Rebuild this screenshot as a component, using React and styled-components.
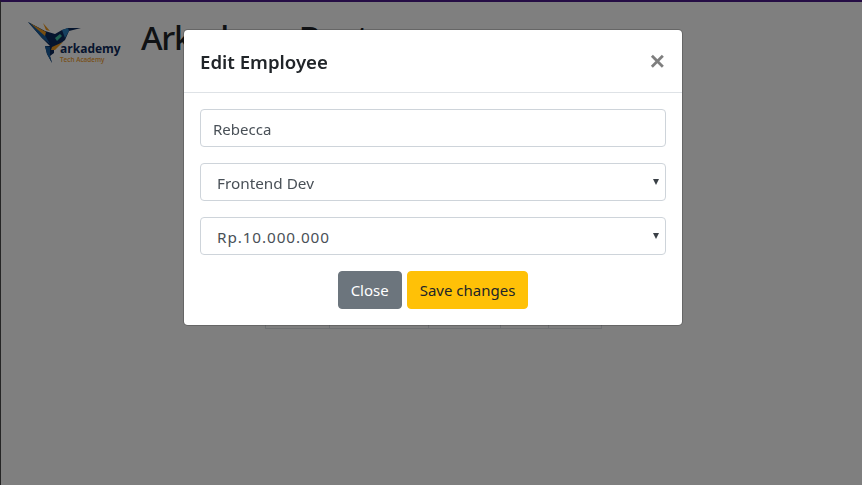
import React from "react";
import styled, { createGlobalStyle } from "styled-components";

const GlobalStyle = createGlobalStyle`
  * {
    box-sizing: border-box;
  }
  html,
  body {
    margin: 0;
    height: 100%;
    overflow: hidden;
    background: #fff;
    font-family: "Noto Sans", "Open Sans", sans-serif;
    color: #212529;
  }
`;

const Page = styled.div`
  height: 485px;
  border-top: 2px solid #4a1a8a;
  border-left: 1px solid #4a4a4a;
`;

const Header = styled.header`
  display: flex;
  align-items: flex-start;
  height: 72px;
  padding: 18px 0 0 25px;
`;

const Logo = styled.div`
  position: relative;
  width: 96px;
  height: 46px;
`;

const LogoName = styled.span`
  position: absolute;
  left: 34px;
  top: 21px;
  font-family: "Open Sans", sans-serif;
  font-size: 12px;
  font-weight: 700;
  line-height: 16px;
  color: #0d2a5c;
`;

const LogoTag = styled.span`
  position: absolute;
  left: 34px;
  top: 35px;
  font-family: "Open Sans", sans-serif;
  font-size: 6.4px;
  font-weight: 600;
  line-height: 9px;
  color: #f0a030;
`;

const Heading = styled.h1`
  margin: 0 0 0 19px;
  font-size: 33px;
  font-weight: 500;
  letter-spacing: -1.3px;
  line-height: 36px;
  white-space: nowrap;
`;

const Table = styled.div`
  display: grid;
  grid-template-columns: 64px 99px 72px 48px 53px;
  width: 337px;
  height: 200px;
  margin: 55px 0 0 264px;
  border-bottom: 1px solid #dee2e6;
  border-left: 1px solid #dee2e6;
`;

const Cell = styled.div`
  border-right: 1px solid #dee2e6;
`;

const Backdrop = styled.div`
  position: fixed;
  inset: 0;
  background: rgba(0, 0, 0, 0.5);
`;

const Modal = styled.div`
  position: fixed;
  top: 29px;
  left: 183px;
  width: 500px;
  background: #fff;
  border: 1px solid rgba(0, 0, 0, 0.2);
  border-radius: 4.8px;
  background-clip: padding-box;
`;

const ModalHeader = styled.div`
  display: flex;
  align-items: center;
  justify-content: space-between;
  height: 63px;
  padding: 0 17px 0 16px;
  border-bottom: 1px solid #dee2e6;
`;

const ModalTitle = styled.h5`
  margin: 2px 0 0;
  font-size: 18.6px;
  font-weight: 600;
  line-height: 30px;
`;

const CloseIcon = styled.button`
  padding: 0;
  border: 0;
  background: transparent;
  font-family: "Liberation Sans", sans-serif;
  font-size: 26px;
  font-weight: 700;
  line-height: 1;
  color: #000;
  opacity: 0.5;
  text-shadow: 0 1px 0 #fff;
`;

const ModalBody = styled.form`
  display: flex;
  flex-direction: column;
  gap: 16px;
  padding: 16px;
`;

const TextField = styled.input`
  width: 100%;
  height: 38px;
  padding: 7px 12px 6px;
  border: 1px solid #ced4da;
  border-radius: 4px;
  background: #fff;
  font-family: inherit;
  font-size: 15px;
  color: #495057;
`;

const SelectWrap = styled.div`
  position: relative;

  &::after {
    content: "";
    position: absolute;
    top: 16px;
    right: 7px;
    border-top: 6px solid #3a4046;
    border-left: 3.5px solid transparent;
    border-right: 3.5px solid transparent;
  }
`;

const SelectField = styled.select`
  display: block;
  width: 100%;
  height: 38px;
  padding: 7px 12px 5px 16px;
  border: 1px solid #ced4da;
  border-radius: 4px;
  background: #fff;
  font-family: inherit;
  font-size: 15.3px;
  letter-spacing: ${(p) => p.$spacing || "0"};
  color: #495057;
  appearance: none;
`;

const Actions = styled.div`
  display: flex;
  justify-content: center;
  gap: 5px;
`;

const Button = styled.button`
  height: 38px;
  padding: 6px 12px;
  border: 1px solid ${(p) => (p.$tone === "warning" ? "#ffc107" : "#6c757d")};
  border-radius: 4px;
  background: ${(p) => (p.$tone === "warning" ? "#ffc107" : "#6c757d")};
  font-family: inherit;
  font-size: 15px;
  line-height: 24px;
  color: ${(p) => (p.$tone === "warning" ? "#212529" : "#fff")};
`;

const Bird = () => (
  <svg width="60" height="46" viewBox="26 20 60 46">
    <polygon points="28,22 45,31 55,34 62,30 68,28 81,28 69,31 65,40 60,44 54,50 54,53 50,56 52,63 47,54 45,46 50,46 42,38" fill="#0d2a5c" />
    <polygon points="28,22 42,30 50,44 42,38" fill="#1a5f9e" />
    <polygon points="30,23 46,32 45,36" fill="#f09a1e" />
    <polygon points="43,23 50,31 46,30" fill="#f09a1e" />
    <polygon points="62,30 68,28 69,31 65,38" fill="#2a80c0" />
    <polygon points="55,38 60,34 62,36 57,41" fill="#3ec0a0" />
    <polygon points="52,47 63,42 55,50 51,50" fill="#f09a1e" />
    <polygon points="45,46 50,47 50,56 52,63 47,54" fill="#1a5f9e" />
  </svg>
);

const App = () => {
  return (
    <>
      <GlobalStyle />
      <Page>
        <Header>
          <Logo>
            <Bird />
            <LogoName>arkademy</LogoName>
            <LogoTag>Tech Academy</LogoTag>
          </Logo>
          <Heading>Arkademy Bootcamp</Heading>
        </Header>
        <Table>
          <Cell />
          <Cell />
          <Cell />
          <Cell />
          <Cell />
        </Table>
      </Page>
      <Backdrop />
      <Modal>
        <ModalHeader>
          <ModalTitle>Edit Employee</ModalTitle>
          <CloseIcon type="button">×</CloseIcon>
        </ModalHeader>
        <ModalBody>
          <TextField defaultValue="Rebecca" />
          <SelectWrap>
            <SelectField defaultValue="Frontend Dev">
              <option>Frontend Dev</option>
              <option>Backend Dev</option>
            </SelectField>
          </SelectWrap>
          <SelectWrap>
            <SelectField defaultValue="Rp.10.000.000" $spacing="0.9px">
              <option>Rp.10.000.000</option>
              <option>Rp.12.000.000</option>
            </SelectField>
          </SelectWrap>
          <Actions>
            <Button type="button">Close</Button>
            <Button type="button" $tone="warning">
              Save changes
            </Button>
          </Actions>
        </ModalBody>
      </Modal>
    </>
  );
};

export default App;
